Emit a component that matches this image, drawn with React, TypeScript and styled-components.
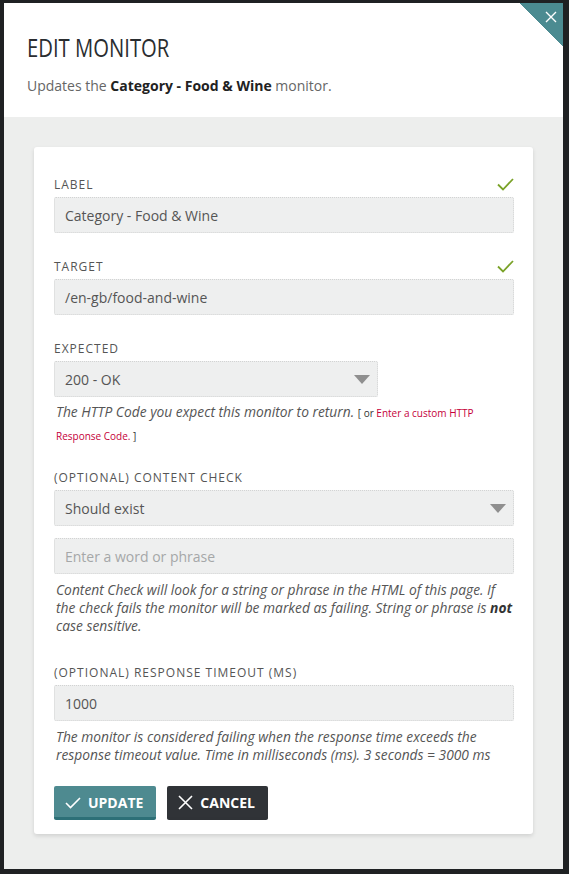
import styled, { createGlobalStyle } from "styled-components";

const GlobalStyle = createGlobalStyle`
  html, body {
    margin: 0;
    padding: 0;
    background: #1f2123;
  }
  body {
    font-family: "Open Sans", "Liberation Sans", sans-serif;
    color: #555;
  }
  * {
    box-sizing: border-box;
  }
`;

interface FieldProps {
  label: string;
  valid?: boolean;
  spacing?: number;
  children: React.ReactNode;
}

function Field({ label, valid, spacing = 24, children }: FieldProps) {
  return (
    <Group $spacing={spacing}>
      <LabelRow>
        <Label>{label}</Label>
        {valid && (
          <svg width="17" height="13" viewBox="0 0 17 13">
            <path d="M1 6.5 L6 11.5 L16 1" fill="none" stroke="#7aa228" strokeWidth="1.8" />
          </svg>
        )}
      </LabelRow>
      {children}
    </Group>
  );
}

function App() {
  return (
    <>
      <GlobalStyle />
      <Backdrop>
        <Modal>
          <Corner>
            <svg width="12" height="12" viewBox="0 0 12 12">
              <path d="M1 1 L11 11 M11 1 L1 11" stroke="#fff" strokeWidth="1.4" />
            </svg>
          </Corner>
          <Header>
            <Title>EDIT MONITOR</Title>
            <Subtitle>
              Updates the <b>Category - Food &amp; Wine</b> monitor.
            </Subtitle>
          </Header>
          <Body>
            <Card>
              <Field label="LABEL" valid>
                <Input>Category - Food &amp; Wine</Input>
              </Field>
              <Field label="TARGET" valid>
                <Input>/en-gb/food-and-wine</Input>
              </Field>
              <Field label="EXPECTED" spacing={21}>
                <Select $width="324px">
                  200 - OK
                  <Arrow />
                </Select>
                <Help $lineHeight="22px" $top="4px">
                  The HTTP Code you expect this monitor to return.{" "}
                  <Small>
                    [ or <Link>Enter a custom HTTP Response Code.</Link> ]
                  </Small>
                </Help>
              </Field>
              <Field label="(OPTIONAL) CONTENT CHECK" spacing={28}>
                <Select>
                  Should exist
                  <Arrow />
                </Select>
                <Input $placeholder $gap>
                  Enter a word or phrase
                </Input>
                <Help>
                  Content Check will look for a string or phrase in the HTML of this page. If
                  the check fails the monitor will be marked as failing. String or phrase is{" "}
                  <b>not</b> case sensitive.
                </Help>
              </Field>
              <Field label="(OPTIONAL) RESPONSE TIMEOUT (MS)">
                <Input>1000</Input>
                <Help>
                  The monitor is considered failing when the response time exceeds the
                  response timeout value. Time in milliseconds (ms). 3 seconds = 3000 ms
                </Help>
              </Field>
              <Actions>
                <Button $kind="primary">
                  <svg width="16" height="12" viewBox="0 0 16 12">
                    <path d="M1 6 L5.5 10.5 L15 1" fill="none" stroke="#fff" strokeWidth="1.6" />
                  </svg>
                  UPDATE
                </Button>
                <Button $kind="dark">
                  <svg width="15" height="15" viewBox="0 0 15 15">
                    <path d="M1 1 L14 14 M14 1 L1 14" stroke="#fff" strokeWidth="1.6" />
                  </svg>
                  CANCEL
                </Button>
              </Actions>
            </Card>
          </Body>
        </Modal>
      </Backdrop>
    </>
  );
}

const Backdrop = styled.div`
  padding: 3px 6px 5px 4px;
  background: #1f2123;
`;

const Modal = styled.div`
  position: relative;
  width: 559px;
  background: #fff;
  overflow: hidden;
`;

const Corner = styled.div`
  position: absolute;
  top: 0;
  right: 0;
  width: 43px;
  height: 43px;
  background: linear-gradient(to top right, transparent 50%, #4b8b91 50%);
  display: flex;
  justify-content: flex-end;
  padding: 8px 6px 0 0;
`;

const Header = styled.div`
  height: 114px;
  padding: 30px 23px 0;
`;

const Title = styled.h1`
  display: inline-block;
  margin: 0;
  font-size: 25px;
  font-weight: 400;
  line-height: 28px;
  color: #2a2d30;
  transform: scaleX(0.81);
  transform-origin: left center;
`;

const Subtitle = styled.p`
  margin: 14px 0 0;
  font-size: 14px;
  line-height: 20px;
  color: #666;

  b {
    color: #222;
    font-weight: 700;
  }
`;

const Body = styled.div`
  background: #edeeed;
  padding: 30px 30px 35px;
`;

const Card = styled.div`
  background: #fff;
  border-radius: 3px;
  box-shadow: 0 2px 4px rgba(0, 0, 0, 0.12);
  padding: 28px 19px 14px 20px;
`;

const Group = styled.div<{ $spacing: number }>`
  margin-bottom: ${(p) => p.$spacing}px;
`;

const LabelRow = styled.div`
  display: flex;
  justify-content: space-between;
  align-items: center;
  height: 18px;
  margin-bottom: 4px;
`;

const Label = styled.label`
  font-size: 12px;
  letter-spacing: 1px;
  color: #555;
`;

const Input = styled.div<{ $placeholder?: boolean; $gap?: boolean }>`
  height: 36px;
  display: flex;
  align-items: center;
  padding: 0 10px;
  margin-top: ${(p) => (p.$gap ? "12px" : "0")};
  background: #eeefef;
  border: 1px dotted #d2d3d3;
  border-radius: 2px;
  font-size: 14px;
  color: ${(p) => (p.$placeholder ? "#a5a7a8" : "#555")};
`;

const Select = styled(Input)<{ $width?: string }>`
  width: ${(p) => p.$width || "100%"};
  justify-content: space-between;
  padding-right: 7px;
`;

const Arrow = styled.span`
  width: 0;
  height: 0;
  border-left: 8px solid transparent;
  border-right: 8px solid transparent;
  border-top: 9px solid #8f8f8f;
`;

const Help = styled.p<{ $lineHeight?: string; $top?: string }>`
  margin: ${(p) => p.$top || "7px"} 0 0;
  padding-left: 2px;
  font-size: 13.8px;
  font-style: italic;
  line-height: ${(p) => p.$lineHeight || "18px"};
  color: #555;

  b {
    font-weight: 700;
    color: #333;
  }
`;

const Small = styled.span`
  font-size: 10px;
  font-style: normal;
  color: #333;
`;

const Link = styled.a`
  color: #c5003a;
  text-decoration: none;
`;

const Actions = styled.div`
  display: flex;
  gap: 11px;
  margin-top: -2px;
`;

const Button = styled.button<{ $kind: "primary" | "dark" }>`
  display: flex;
  align-items: center;
  gap: 7px;
  height: 34px;
  padding: 2px 13px 0 11px;
  border: none;
  border-radius: 2px;
  border-bottom: 3px solid ${(p) => (p.$kind === "primary" ? "#2d7077" : "#2f3236")};
  background: ${(p) => (p.$kind === "primary" ? "#4e8a90" : "#303337")};
  color: #fff;
  font-family: "Open Sans", "Liberation Sans", sans-serif;
  font-size: 14px;
  font-weight: 700;
`;

export default App;
